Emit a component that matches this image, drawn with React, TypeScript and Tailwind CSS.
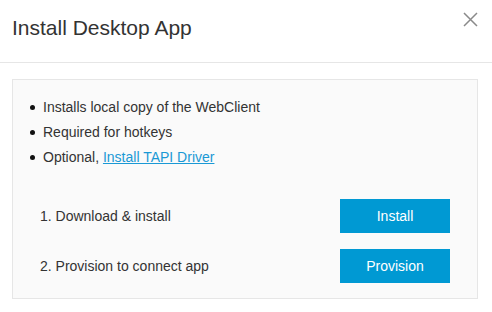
export default function App() {
  const bullets = ["Installs local copy of the WebClient", "Required for hotkeys"];
  return (
    <div className="w-[492px] h-[312px] bg-white text-[#333333] font-['Liberation_Sans',Arial,sans-serif]">
      {/* header */}
      <div className="h-[63px] border-b border-[#e6e6e6] flex justify-between pl-[12px] pr-[14px]">
        <h1 className="pt-[14px] text-[21px] leading-[28px] font-normal text-[#333333]">Install Desktop App</h1>
        <button className="mt-[12px] w-[15px] h-[15px] flex items-center justify-center">
          <svg width="15" height="15" viewBox="0 0 15 15">
            <path d="M1 1L14 14M14 1L1 14" stroke="#8a8a8a" strokeWidth="1.5" fill="none" />
          </svg>
        </button>
      </div>

      {/* body */}
      <div className="pt-[16px] pl-[12px]">
        <div className="w-[466px] border border-[#e6e6e6] bg-[#fafafa] pt-[15px] pb-[15px]">
          <ul className="pl-[17px] text-[14px] leading-[25px]">
            {bullets.map((b) => (
              <li key={b} className="flex items-center">
                <span className="w-[5px] h-[5px] rounded-full bg-[#111111] mr-[8px]" />
                {b}
              </li>
            ))}
            <li className="flex items-center">
              <span className="w-[5px] h-[5px] rounded-full bg-[#111111] mr-[8px]" />
              Optional,&nbsp;
              <a href="#" className="text-[#1a99d5] underline">Install TAPI Driver</a>
            </li>
          </ul>

          <div className="mt-[29px] pl-[27px] pr-[27px] flex flex-col gap-[16px] text-[14px]">
            <div className="flex items-center justify-between">
              <span>1. Download &amp; install</span>
              <button className="w-[110px] h-[34px] bg-[#0099d3] text-white">Install</button>
            </div>
            <div className="flex items-center justify-between">
              <span>2. Provision to connect app</span>
              <button className="w-[110px] h-[34px] bg-[#0099d3] text-white">Provision</button>
            </div>
          </div>
        </div>
      </div>
    </div>
  );
}
